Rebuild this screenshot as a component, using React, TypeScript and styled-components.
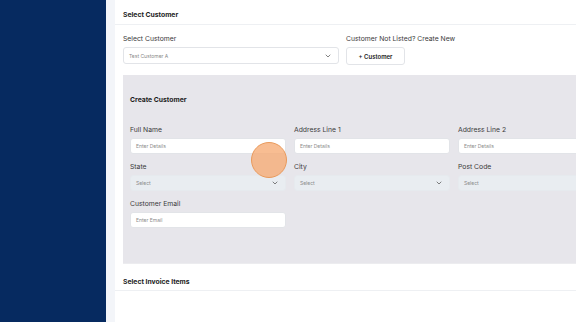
import styled, { createGlobalStyle } from "styled-components";
import { ChevronDown } from "lucide-react";

const GlobalStyle = createGlobalStyle`
  body {
    margin: 0;
    font-family: Inter, "Noto Sans", sans-serif;
    background: #f4f6fa;
  }
`;

const Page = styled.div`
  display: flex;
  width: 576px;
  height: 322px;
  overflow: hidden;
  position: relative;
`;

const Sidebar = styled.aside`
  width: 106px;
  flex-shrink: 0;
  background: #062a60;
`;

const Main = styled.main`
  flex-shrink: 0;
  padding-left: 9px;
  background: #f3f5f9;
`;

const Card = styled.section`
  width: 620px;
  background: #fff;
  min-height: 322px;
`;

const SectionHeader = styled.div<{ $h: number; $pt: number }>`
  height: ${(p) => p.$h}px;
  box-sizing: border-box;
  padding: ${(p) => p.$pt}px 8px 0;
  display: flex;
  align-items: center;
  border-bottom: 1px solid #eef0f3;
  font-size: 6.8px;
  font-weight: 700;
  color: #1c1c1c;
`;

const Body = styled.div`
  padding: 9px 8px 0;
`;

const TopRow = styled.div`
  display: flex;
  gap: 7px;
`;

const Field = styled.div<{ $width?: number }>`
  display: flex;
  flex-direction: column;
  gap: 3px;
  width: ${(p) => (p.$width ? `${p.$width}px` : "auto")};
`;

const Label = styled.label`
  font-size: 6.8px;
  line-height: 10px;
  color: #3a3a3a;
`;

const Box = styled.div<{ $tone?: "white" | "muted"; $h?: number }>`
  height: ${(p) => p.$h ?? 16}px;
  box-sizing: border-box;
  display: flex;
  align-items: center;
  justify-content: space-between;
  padding: 0 6px 0 5px;
  border-radius: 3px;
  border: 1px solid ${(p) => (p.$tone === "muted" ? "#e6eaee" : "#e2e4e8")};
  background: ${(p) => (p.$tone === "muted" ? "#e9edf1" : "#fff")};
  font-size: 5px;
  color: #8a8a8a;
  svg {
    color: #444;
  }
`;

const Button = styled.button`
  width: 59px;
  height: 18px;
  border: 1px solid #e2e4e8;
  border-radius: 3px;
  background: #fff;
  font-family: inherit;
  font-size: 6px;
  font-weight: 600;
  color: #222;
  padding: 0;
`;

const Panel = styled.div`
  margin-top: 10px;
  background: #e7e6eb;
  padding: 19px 7px 35px;
  border-bottom: 1px solid #ececef;
`;

const PanelTitle = styled.div`
  font-size: 6.8px;
  font-weight: 700;
  color: #1c1c1c;
  line-height: 11px;
  margin-bottom: 20px;
`;

const Grid = styled.div`
  display: grid;
  grid-template-columns: 156px 156px 156px;
  column-gap: 8px;
  row-gap: 8px;
`;

const Spacer = styled.div`
  height: 9px;
`;

const Cursor = styled.div`
  position: absolute;
  left: 251px;
  top: 142px;
  width: 36px;
  height: 36px;
  box-sizing: border-box;
  border-radius: 50%;
  background: rgba(246, 170, 115, 0.78);
  border: 1px solid #e99a5c;
`;

const Chevron = () => <ChevronDown size={8} strokeWidth={2} />;

const App = () => {
  return (
    <Page>
      <GlobalStyle />
      <Sidebar />
      <Main>
        <Card>
          <SectionHeader $h={25} $pt={5}>Select Customer</SectionHeader>
          <Body>
            <TopRow>
              <Field $width={216}>
                <Label>Select Customer</Label>
                <Box $h={17}>
                  Test Customer A
                  <Chevron />
                </Box>
              </Field>
              <Field>
                <Label>Customer Not Listed? Create New</Label>
                <Button>+ Customer</Button>
              </Field>
            </TopRow>
            <Panel>
              <PanelTitle>Create Customer</PanelTitle>
              <Grid>
                <Field>
                  <Label>Full Name</Label>
                  <Box>Enter Details</Box>
                </Field>
                <Field>
                  <Label>Address Line 1</Label>
                  <Box>Enter Details</Box>
                </Field>
                <Field>
                  <Label>Address Line 2</Label>
                  <Box>Enter Details</Box>
                </Field>
                <Field>
                  <Label>State</Label>
                  <Box $tone="muted">
                    Select
                    <Chevron />
                  </Box>
                </Field>
                <Field>
                  <Label>City</Label>
                  <Box $tone="muted">
                    Select
                    <Chevron />
                  </Box>
                </Field>
                <Field>
                  <Label>Post Code</Label>
                  <Box $tone="muted">
                    Select
                    <Chevron />
                  </Box>
                </Field>
                <Field>
                  <Label>Customer Email</Label>
                  <Box>Enter Email</Box>
                </Field>
              </Grid>
            </Panel>
          </Body>
          <Spacer />
          <SectionHeader $h={18} $pt={0}>Select Invoice Items</SectionHeader>
        </Card>
      </Main>
      <Cursor />
    </Page>
  );
};

export default App;
